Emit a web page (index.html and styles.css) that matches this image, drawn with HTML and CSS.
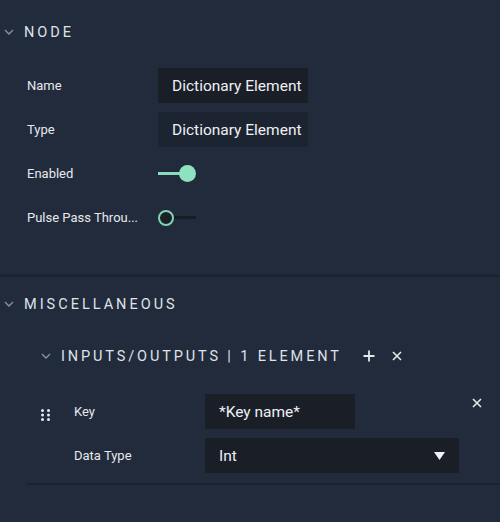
FILE: index.html
```html
<!DOCTYPE html>
<html>
<head>
<meta charset="utf-8">
<link rel="stylesheet" href="styles.css">
</head>
<body>
<div class="panel">
  <section class="section">
    <div class="head">
      <svg class="chev" width="10" height="6" viewBox="0 0 10 6"><path d="M1 1l4 4 4-4" fill="none" stroke="#8a93a3" stroke-width="1.3"/></svg>
      <span class="title">NODE</span>
    </div>
    <div class="rows">
      <div class="row"><span class="label">Name</span><div class="input">Dictionary Element</div></div>
      <div class="row"><span class="label">Type</span><div class="input ro">Dictionary Element</div></div>
      <div class="row"><span class="label">Enabled</span>
        <div class="toggle on"><span class="track"></span><span class="knob"></span></div>
      </div>
      <div class="row"><span class="label">Pulse Pass Throu...</span>
        <div class="toggle off"><span class="knob"></span><span class="track"></span></div>
      </div>
    </div>
  </section>
  <section class="section misc">
    <div class="head">
      <svg class="chev" width="10" height="6" viewBox="0 0 10 6"><path d="M1 1l4 4 4-4" fill="none" stroke="#8a93a3" stroke-width="1.3"/></svg>
      <span class="title">MISCELLANEOUS</span>
    </div>
    <div class="sub">
      <div class="subhead">
        <svg class="chev" width="10" height="6" viewBox="0 0 10 6"><path d="M1 1l4 4 4-4" fill="none" stroke="#8a93a3" stroke-width="1.3"/></svg>
        <span class="title small">INPUTS/OUTPUTS | 1 ELEMENT</span>
        <svg class="plus" width="12" height="12" viewBox="0 0 12 12"><path d="M6 0.5v11M0.5 6h11" stroke="#e6e8ee" stroke-width="1.8"/></svg>
        <svg class="x" width="10" height="10" viewBox="0 0 10 10"><path d="M1 1l8 8M9 1l-8 8" stroke="#e6e8ee" stroke-width="1.6"/></svg>
      </div>
      <div class="item">
        <div class="handle">
          <svg width="9" height="12" viewBox="0 0 9 12"><g fill="#e6e8ee"><circle cx="1.5" cy="1.5" r="1.5"/><circle cx="7.5" cy="1.5" r="1.5"/><circle cx="1.5" cy="6" r="1.5"/><circle cx="7.5" cy="6" r="1.5"/><circle cx="1.5" cy="10.5" r="1.5"/><circle cx="7.5" cy="10.5" r="1.5"/></g></svg>
        </div>
        <div class="fields">
          <div class="row"><span class="label">Key</span><div class="input">*Key name*</div></div>
          <div class="row"><span class="label">Data Type</span>
            <div class="input select"><span>Int</span>
              <svg width="11" height="8" viewBox="0 0 11 8"><path d="M0 0h11L5.5 8z" fill="#f0f2f6"/></svg>
            </div>
          </div>
        </div>
        <svg class="x remove" width="10" height="10" viewBox="0 0 10 10"><path d="M1 1l8 8M9 1l-8 8" stroke="#e6e8ee" stroke-width="1.6"/></svg>
      </div>
    </div>
  </section>
</div>
</body>
</html>
```

FILE: styles.css
```css
* { box-sizing: border-box; }
html, body { margin: 0; padding: 0; }
body {
  width: 500px;
  height: 522px;
  background: #222b3b;
  font-family: Roboto, "Liberation Sans", sans-serif;
  color: #e4e6ec;
  overflow: hidden;
}
.panel { display: flex; flex-direction: column; }
.section { padding-top: 22px; }
.section + .section {
  border-top: 2px solid #1b2230;
  box-shadow: 0 -1px 0 #1f2635;
}
.misc { padding-top: 17px; }
.head {
  display: flex;
  align-items: center;
  height: 20px;
  padding-left: 4px;
}
.chev { flex: none; }
.head .chev { margin-right: 10px; }
.title {
  font-size: 14.5px;
  letter-spacing: 3px;
  color: #dfe2e8;
  font-weight: 400;
}
.rows {
  padding: 26px 0 40px 27px;
  display: flex;
  flex-direction: column;
  gap: 9px;
}
.row {
  display: flex;
  align-items: center;
  height: 35px;
}
.label {
  width: 131px;
  flex: none;
  font-size: 13px;
  color: #e6e8ee;
}
.input {
  height: 35px;
  width: 150px;
  background: #191e27;
  font-size: 15.5px;
  color: #eef0f4;
  display: flex;
  align-items: center;
  padding-left: 14px;
  white-space: nowrap;
}
.input.ro { background: #1d2431; }
.toggle {
  display: flex;
  align-items: center;
  width: 40px;
  height: 18px;
}
.toggle.on .track { width: 22px; height: 3px; background: #86dcbb; }
.toggle.on .knob {
  width: 17px; height: 17px; border-radius: 50%;
  background: #8de2c2; margin-left: -1px;
}
.toggle.off .knob {
  width: 16px; height: 16px; border-radius: 50%;
  border: 2.5px solid #7fd3b3; background: #1a1f28; flex: none;
}
.toggle.off .track { width: 22px; height: 3px; background: #171c25; }
.sub { padding: 32px 0 0 27px; }
.subhead {
  display: flex;
  align-items: center;
  height: 20px;
  padding-left: 14px;
}
.subhead .chev { margin-right: 10px; }
.title.small { font-size: 14.5px; letter-spacing: 2.87px; }
.plus { margin-left: 21px; }
.x { margin-left: 17px; }
.item {
  display: flex;
  align-items: flex-start;
  margin-top: 28px;
  padding-bottom: 10px;
  border-bottom: 2px solid #1b2230;
}
.handle { width: 47px; padding: 12px 0 0 14px; flex: none; }
.fields { display: flex; flex-direction: column; gap: 9px; }
.fields .row { height: 35px; }
.select { width: 254px; justify-content: space-between; padding-right: 14px; padding-left: 14px; border-radius: 2px; }
.remove { margin-left: 13px; margin-top: 4px; }
```
